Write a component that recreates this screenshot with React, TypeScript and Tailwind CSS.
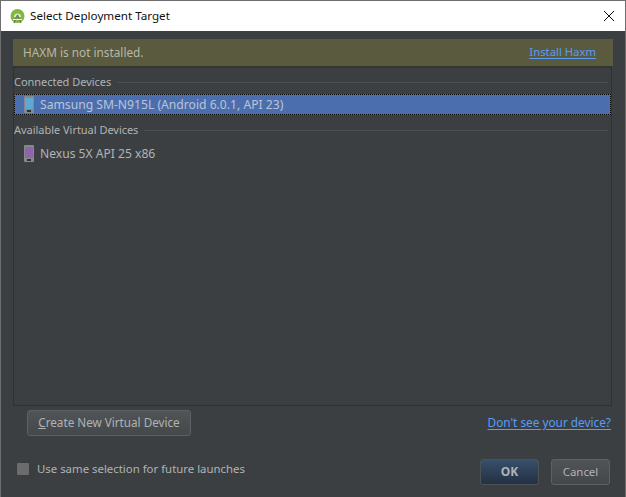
import React from "react";

function Phone({ color }: { color: string }) {
  return (
    <svg width="10" height="17" viewBox="0 0 10 17" className="shrink-0">
      <rect x="0" y="0" width="10" height="17" rx="1" fill="#85898c" />
      <rect x="1" y="2" width="8" height="11" fill={color} />
      <rect x="3" y="14" width="4" height="2" fill="#2f3133" />
    </svg>
  );
}

function Logo() {
  return (
    <svg width="15" height="15" viewBox="0 0 15 15" className="shrink-0">
      <circle cx="7.5" cy="7" r="7" fill="#82b83e" />
      <path d="M4 8 a3.5 3.5 0 0 1 7 0 z" fill="#dfe8cf" />
      <path d="M7.5 6 L4 14 M7.5 6 L11 14" stroke="#6b7565" strokeWidth="1.3" fill="none" />
      <rect x="3" y="10" width="9" height="1" fill="#f4f7ef" />
    </svg>
  );
}

function Section({ label }: { label: string }) {
  return (
    <div className="flex items-center h-[16px] pr-[3px] gap-[6px]">
      <span className="text-[11px] tracking-[-0.03px] pt-px">{label}</span>
      <div className="flex-1 h-px bg-[#4b4e50]" />
    </div>
  );
}

export default function App() {
  return (
    <div
      className="w-[626px] h-[497px] flex flex-col bg-[#3c3f41] text-[#b0b3b5] text-[12px] border-l border-t border-r border-[#6e6e6e] overflow-hidden"
      style={{ fontFamily: '"Noto Sans", sans-serif' }}
    >
      <div className="h-[30px] bg-white flex items-center pl-[9px] pr-[10px] shrink-0">
        <Logo />
        <span className="ml-[5px] text-[#111] text-[11.65px]">Select Deployment Target</span>
        <svg width="12" height="12" viewBox="0 0 12 12" className="ml-auto">
          <path d="M1 1 L11 11 M11 1 L1 11" stroke="#111" strokeWidth="1" fill="none" />
        </svg>
      </div>

      <div className="flex-1 flex flex-col pt-[8px] pl-[12px] pr-[12px]">
        <div className="h-[27px] bg-[#5a5a3f] flex items-center pl-[10px] pr-[17px] shrink-0 text-[#b6b8a8]">
          <span className="text-[11.8px] pt-px">HAXM is not installed.</span>
          <span className="ml-auto text-[11.3px] text-[#589df6] underline underline-offset-2">Install Haxm</span>
        </div>

        <div className="h-[340px] border border-t-2 border-[#2f3133] border-t-[#33352f] mr-px flex flex-col pt-[6px] shrink-0">
          <Section label="Connected Devices" />
          <div className="h-[21px] mt-[4px] bg-[#4b6eaf] border border-dotted border-black flex items-center pl-[9px] gap-[6px] text-[#bcc4d4]">
            <Phone color="#5fa8d3" />
            <span className="text-[12.15px] pt-px">Samsung SM-N915L (Android 6.0.1, API 23)</span>
          </div>
          <div className="mt-[7px]">
            <Section label="Available Virtual Devices" />
          </div>
          <div className="h-[20px] mt-[5px] flex items-center pl-[10px] gap-[6px]">
            <Phone color="#8e65ab" />
            <span className="text-[12.1px] pt-[2px]">Nexus 5X API 25 x86</span>
          </div>
        </div>

        <div className="flex items-center justify-between pl-[14px] pr-[2px] mt-[3px] h-[27px] shrink-0">
          <button className="w-[164px] h-[26px] rounded-[3px] border border-[#5e6163] bg-gradient-to-b from-[#505456] to-[#44484a] text-[#b0b3b5] text-[11.7px] pt-px">
            <span className="underline">C</span>reate New Virtual Device
          </button>
          <span className="text-[11.8px] text-[#589df6] underline underline-offset-2">Don't see your device?</span>
        </div>

        <div className="flex items-center pl-[3px] pr-[3px] mt-[22px] h-[27px] shrink-0">
          <div className="w-[14px] h-[14px] rounded-[2px] border border-[#3a3c3e] bg-[#6a6c6e] -mt-[6px]" />
          <span className="ml-[7px] -mt-[6px] text-[11.4px]">Use same selection for future launches</span>
          <button className="ml-auto w-[59px] h-[26px] rounded-[3px] border border-[#4e5153] bg-gradient-to-b from-[#384f6b] to-[#233143] font-bold text-[#b0b3b5]">
            OK
          </button>
          <button className="ml-[12px] w-[59px] h-[26px] rounded-[3px] border border-[#5e6163] bg-gradient-to-b from-[#505456] to-[#44484a] text-[#b0b3b5] text-[11.4px]">
            Cancel
          </button>
        </div>
      </div>
    </div>
  );
}
